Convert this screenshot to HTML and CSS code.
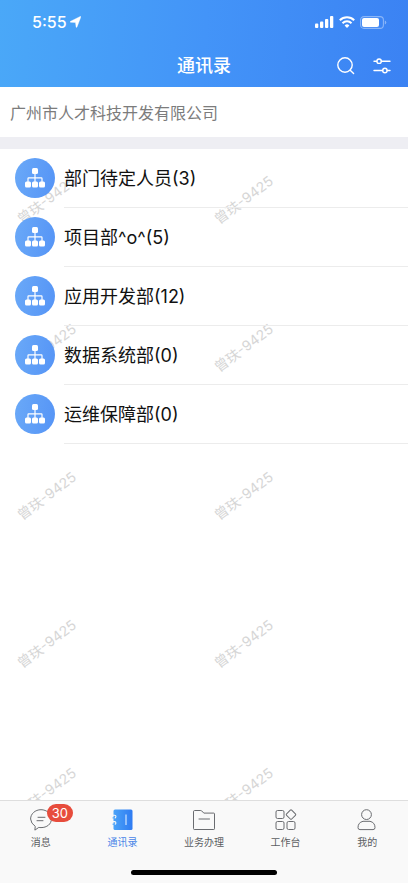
FILE: index.html
```html
<!DOCTYPE html>
<html lang="zh-CN">
<head>
<meta charset="utf-8">
<meta name="viewport" content="width=device-width, initial-scale=1">
<title>通讯录</title>
<link rel="stylesheet" href="styles.css">
</head>
<body>
<svg class="defs" aria-hidden="true">
  <defs>
    <symbol id="org" viewBox="0 0 20 20">
      <g fill="currentColor"><rect x="7" y="0" width="6" height="6" rx="1.5"/><rect x="0" y="13.5" width="6" height="6" rx="1.5"/><rect x="7" y="13.5" width="6" height="6" rx="1.5"/><rect x="14" y="13.5" width="6" height="6" rx="1.5"/></g>
      <path d="M10 5v9M3 14v-3.6q0-.6.6-.6h12.8q.6 0 .6.6V14" fill="none" stroke="currentColor" stroke-width="1.2"/>
    </symbol>
    <linearGradient id="book" x1="0" x2="1"><stop offset="0" stop-color="#4aa3f8"/><stop offset="1" stop-color="#2f7bf2"/></linearGradient>
  </defs>
</svg>
<div class="app">
  <header class="header">
    <div class="status">
      <div class="status-time">
        <span>5:55</span>
        <svg width="11" height="12" viewBox="0 0 11 12"><path d="M10.2.5Q11.200.1 10.800 1.100L7 10.900Q6.500 11.900 6.100 10.900L5.500 6.500.7 6.300Q-.4 6 .6 5.300z" fill="#fff" stroke="#fff" stroke-width=".4"/></svg>
      </div>
      <div class="status-icons">
        <svg width="19" height="12" viewBox="0 0 19 12" fill="#fff"><rect x="0" y="7.5" width="3.3" height="4.5" rx="1"/><rect x="5" y="5.5" width="3.3" height="6.5" rx="1"/><rect x="10" y="3" width="3.3" height="9" rx="1"/><rect x="15" y="0" width="3.3" height="12" rx="1"/></svg>
        <svg width="16" height="12" viewBox="0 0 16 12"><g fill="none" stroke="#fff" stroke-width="2"><path d="M.8 4.3a10.2 10.2 0 0 1 14.4 0"/><path d="M3.5 7.2a6.3 6.3 0 0 1 9 0"/></g><path d="M8 12 5.6 9.5a3.4 3.4 0 0 1 4.8 0z" fill="#fff"/></svg>
        <svg width="27" height="13" viewBox="0 0 27 13"><rect x=".6" y=".6" width="22.8" height="11.8" rx="3.4" fill="none" stroke="#fff" stroke-opacity=".4" stroke-width="1.1"/><rect x="2" y="2" width="17" height="9" rx="2" fill="#fff"/><path d="M24.8 4.5q1.5.4 1.5 2t-1.5 2z" fill="#fff" fill-opacity=".4"/></svg>
      </div>
    </div>
    <div class="navbar">
      <h1 class="title">通讯录</h1>
      <div class="actions">
        <button class="action" type="button" aria-label="搜索"><svg width="18" height="18" viewBox="0 0 18 18" fill="none" stroke="#fff" stroke-width="1.4" stroke-linecap="round"><circle cx="8" cy="8" r="7.2"/><path d="m13.200 13.200 3.400 3.400"/></svg></button>
        <button class="action" type="button" aria-label="筛选"><svg width="18" height="18" viewBox="0 0 18 18" fill="none" stroke="#fff" stroke-width="1.4" stroke-linecap="round"><path d="M1 4.200h2.8M8.4 4.200H17M1 13.500h8.6M14.2 13.500H17"/><circle cx="6.1" cy="4.200" r="2.2"/><circle cx="11.9" cy="13.500" r="2.2"/></svg></button>
      </div>
    </div>
  </header>
  <p class="company">广州市人才科技开发有限公司</p>
  <main class="content">
    <div class="watermarks" aria-hidden="true">
      <span class="mark">曾玞-9425</span><span class="mark">曾玞-9425</span>
      <span class="mark">曾玞-9425</span><span class="mark">曾玞-9425</span>
      <span class="mark">曾玞-9425</span><span class="mark">曾玞-9425</span>
      <span class="mark">曾玞-9425</span><span class="mark">曾玞-9425</span>
      <span class="mark">曾玞-9425</span><span class="mark">曾玞-9425</span>
    </div>
    <ul class="list">
      <li><a class="row" href="#"><span class="avatar"><svg width="20" height="20"><use href="#org"/></svg></span><span class="name">部门待定人员(3)</span></a></li>
      <li><a class="row" href="#"><span class="avatar"><svg width="20" height="20"><use href="#org"/></svg></span><span class="name">项目部^o^(5)</span></a></li>
      <li><a class="row" href="#"><span class="avatar"><svg width="20" height="20"><use href="#org"/></svg></span><span class="name">应用开发部(12)</span></a></li>
      <li><a class="row" href="#"><span class="avatar"><svg width="20" height="20"><use href="#org"/></svg></span><span class="name">数据系统部(0)</span></a></li>
      <li><a class="row" href="#"><span class="avatar"><svg width="20" height="20"><use href="#org"/></svg></span><span class="name">运维保障部(0)</span></a></li>
    </ul>
  </main>
  <footer class="footer">
    <nav class="tabs">
      <a class="tab" href="#"><span class="tab-icon"><svg width="22" height="22" viewBox="0 0 22 22" fill="none" stroke="#6a6c70" stroke-linecap="round" stroke-linejoin="round"><path d="M4.9 17.1A9.4 9.4 0 0 1 .6 10C.6 4.8 5.2.7 11 .7S21.4 4.8 21.4 10 16.8 18.600 11 18.600q-1.100 0-2.200-.2L5.200 20.900z"/><path d="M8 8.300h7M7 11.700h6"/></svg><span class="badge">30</span></span><span>消息</span></a>
      <a class="tab active" href="#" aria-current="page"><span class="tab-icon"><svg width="22" height="22" viewBox="0 0 22 22"><rect x="2.500" y=".5" width="19" height="20.500" rx="1.500" fill="url(#book)"/><path d="M15 5.500v10.500" stroke="#cfe5ff" stroke-width="1.200"/><g fill="none" stroke="#f9f9f9" stroke-width="1.100"><path d="M2 6.300h1.600a1.300 1.300 0 1 1 0 2.600"/><path d="M2 12.600h1.600a1.300 1.300 0 1 1 0 2.600"/></g><path d="M1.500 8.900h2.200M1.500 15.200h2.200" stroke="#4aa3f8" stroke-width="1"/></svg></span><span>通讯录</span></a>
      <a class="tab" href="#"><span class="tab-icon"><svg width="24" height="22" viewBox="0 0 24 22" fill="none" stroke="#6a6c70" stroke-linecap="round" stroke-linejoin="round"><path d="M1.500 2.500q0-1 1-1h6.300q.6 0 1 .5l2 2.100h10q.7 0 .7.700v15q0 .7-.7.700H2.200q-.7 0-.7-.7z"/><path d="M7 10h10.500"/></svg></span><span>业务办理</span></a>
      <a class="tab" href="#"><span class="tab-icon"><svg width="22" height="22" viewBox="0 0 22 22" fill="none" stroke="#6a6c70" stroke-linejoin="round"><rect x="1" y="1.500" width="8" height="8" rx="1.500"/><rect x="1" y="12.500" width="8" height="8" rx="1.500"/><rect x="12" y="12.500" width="8" height="8" rx="1.500"/><rect x="12.400" y="2" width="7.200" height="7.200" rx="1" transform="rotate(45 16 5.600)"/></svg></span><span>工作台</span></a>
      <a class="tab" href="#"><span class="tab-icon"><svg width="22" height="22" viewBox="0 0 22 22" fill="none" stroke="#6a6c70"><circle cx="10.500" cy="5.600" r="4.900"/><path d="M7 12.300h7q5 1.200 5 6.300 0 2-2 2h-13q-2 0-2-2 0-5.100 5-6.300z" stroke-linejoin="round"/></svg></span><span>我的</span></a>
    </nav>
    <div class="home"></div>
  </footer>
</div>
</body>
</html>
```

FILE: styles.css
```css
* {
  box-sizing: border-box;
}

body {
  margin: 0;
  background: #fff;
  color: #111;
  font-family: Inter, "Noto Sans CJK SC", sans-serif;
}

a {
  color: inherit;
  text-decoration: none;
}

svg {
  display: block;
}

.defs {
  position: absolute;
  width: 0;
  height: 0;
}

.app {
  display: flex;
  flex-direction: column;
  min-height: 100vh;
}

.header {
  background: linear-gradient(95deg, #4aa8f8, #4394f8 50%, #3b82f3);
  color: #fff;
}

.status {
  display: flex;
  align-items: center;
  justify-content: space-between;
  height: 44px;
  padding: 0 21px 0 32px;
}

.status-time,
.status-icons {
  display: flex;
  align-items: center;
}

.status-time {
  gap: 3px;
  font-size: 16px;
  font-weight: 500;
}

.status-icons {
  gap: 5px;
}

.navbar {
  display: grid;
  grid-template-columns: 1fr auto 1fr;
  align-items: center;
  height: 43px;
  padding: 0 16px;
}

.title {
  grid-column: 2;
  margin: 0;
  font-size: 18px;
  font-weight: 500;
  line-height: 24px;
}

.actions {
  display: flex;
  justify-content: flex-end;
  gap: 16px;
}

.action {
  padding: 1px;
  border: 0;
  background: none;
}

.company {
  margin: 0;
  padding: 14px 10px 12px;
  border-bottom: 12px solid #eeeef3;
  color: #7c7c7c;
  font-size: 16px;
  line-height: 24px;
}

.content {
  position: relative;
  flex: 1;
  overflow: hidden;
}

.watermarks {
  position: absolute;
  inset: 0;
  display: grid;
  grid-template-columns: repeat(2, 197px);
  grid-auto-rows: 148px;
  align-items: start;
  justify-items: start;
  padding-left: 12px;
  color: #d6d6d6;
  font-size: 14px;
  line-height: 102px;
}

.mark {
  transform: rotate(-37deg);
}

.list {
  position: relative;
  margin: 0;
  padding: 0;
  list-style: none;
}

.row {
  display: flex;
  align-items: flex-start;
  gap: 9px;
  padding-left: 15px;
}

.avatar {
  display: grid;
  flex: none;
  place-items: center;
  width: 40px;
  height: 40px;
  margin-top: 9px;
  border-radius: 50%;
  background: linear-gradient(100deg, #6aa9f8, #5594f6);
  color: #fff;
}

.name {
  flex: 1;
  padding-top: 2px;
  border-bottom: 1px solid #ececec;
  font-size: 18px;
  line-height: 56px;
}

.footer {
  border-top: 1px solid #dedede;
  background: #f9f9f9;
}

.tabs {
  display: grid;
  grid-template-columns: repeat(5, 1fr);
  padding-top: 8px;
}

.tab {
  display: flex;
  flex-direction: column;
  align-items: center;
  gap: 3px;
  color: #5c5e62;
  font-size: 10px;
  line-height: 16px;
}

.tab.active {
  color: #4a86e8;
}

.tab-icon {
  position: relative;
}

.badge {
  position: absolute;
  top: -5px;
  left: 17px;
  padding: 0 5px;
  border-radius: 9px;
  background: #e74c3c;
  color: #fff;
  font-size: 13px;
  line-height: 18px;
}

.home {
  width: 36%;
  height: 5px;
  margin: 20px auto 8px;
  border-radius: 3px;
  background: #000;
}
```
